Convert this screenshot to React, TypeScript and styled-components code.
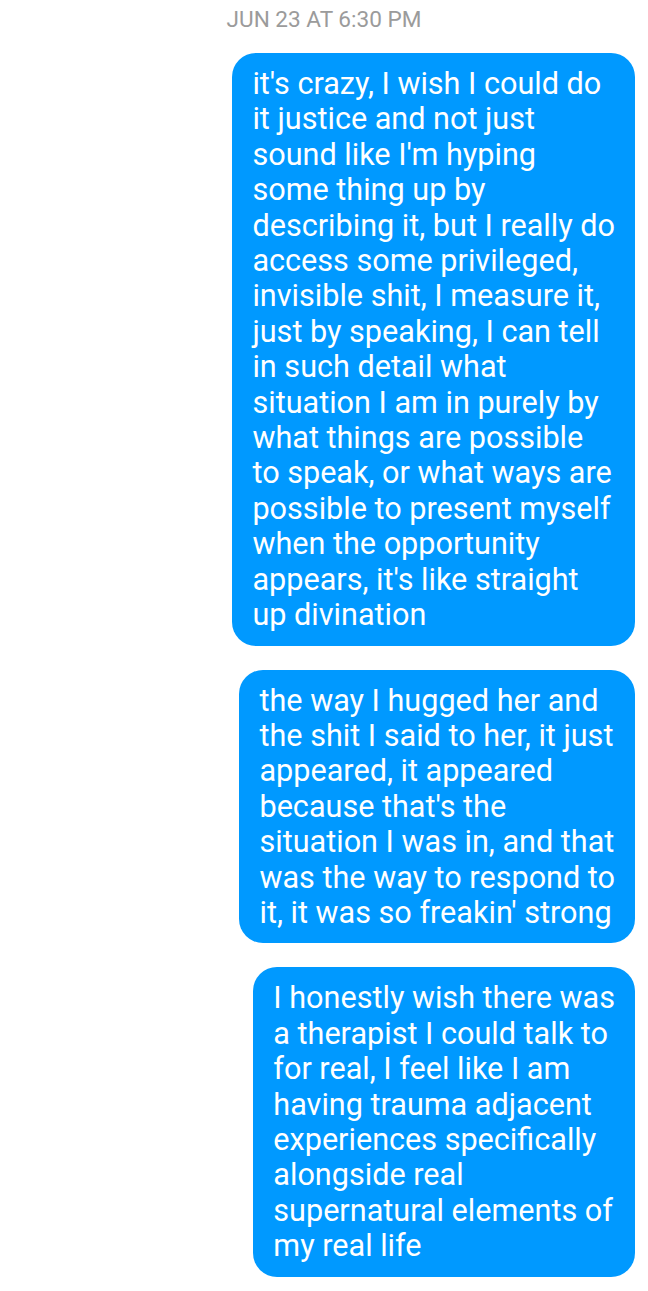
import React from "react";
import styled, { createGlobalStyle } from "styled-components";

const Global = createGlobalStyle`
  html, body { margin: 0; padding: 0; background: #ffffff; }
  body { font-family: Roboto, "Noto Sans", "Liberation Sans", sans-serif; -webkit-font-smoothing: antialiased; }
`;

const Thread = styled.div`
  display: flex;
  flex-direction: column;
  align-items: flex-end;
  padding: 6px 13px 0 0;
  width: 648px;
  box-sizing: border-box;
`;

const Stamp = styled.div`
  align-self: center;
  padding-left: 13px;
  color: #9b9b9b;
  font-size: 22.6px;
  line-height: 28px;
  letter-spacing: 0;
  margin-bottom: 19px;
`;

const Bubble = styled.div<{ $gap?: number }>`
  background: #0099ff;
  color: #ffffff;
  border-radius: 24px;
  padding: 13px 20px 13px 20px;
  font-size: 30.6px;
  line-height: 35.4px;
  margin-top: ${(p) => p.$gap ?? 0}px;
  box-sizing: border-box;
`;

const Line = styled.span`
  display: block;
  white-space: nowrap;
`;

const messages: string[][] = [
  [
    "it's crazy, I wish I could do",
    "it justice and not just",
    "sound like I'm hyping",
    "some thing up by",
    "describing it, but I really do",
    "access some privileged,",
    "invisible shit, I measure it,",
    "just by speaking, I can tell",
    "in such detail what",
    "situation I am in purely by",
    "what things are possible",
    "to speak, or what ways are",
    "possible to present myself",
    "when the opportunity",
    "appears, it's like straight",
    "up divination",
  ],
  [
    "the way I hugged her and",
    "the shit I said to her, it just",
    "appeared, it appeared",
    "because that's the",
    "situation I was in, and that",
    "was the way to respond to",
    "it, it was so freakin' strong",
  ],
  [
    "I honestly wish there was",
    "a therapist I could talk to",
    "for real, I feel like I am",
    "having trauma adjacent",
    "experiences specifically",
    "alongside real",
    "supernatural elements of",
    "my real life",
  ],
];

export default function App() {
  return (
    <>
      <Global />
      <Thread>
        <Stamp>JUN 23 AT 6:30 PM</Stamp>
        {messages.map((lines, i) => (
          <Bubble key={i} $gap={i === 0 ? 0 : 24}>
            {lines.map((l, j) => (
              <Line key={j}>{l}</Line>
            ))}
          </Bubble>
        ))}
      </Thread>
    </>
  );
}
